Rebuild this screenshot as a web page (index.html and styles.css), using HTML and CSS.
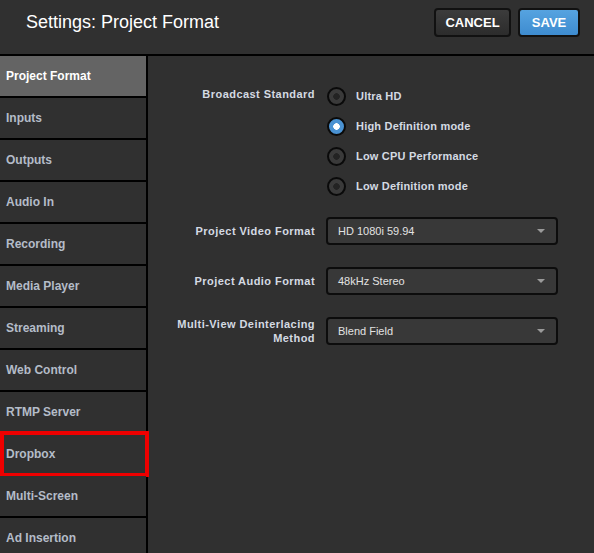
FILE: index.html
```html
<!DOCTYPE html>
<html>
<head>
<meta charset="utf-8">
<link rel="stylesheet" href="styles.css">
</head>
<body>
<div class="app">
  <header class="header">
    <h1 class="title">Settings: Project Format</h1>
    <div class="actions">
      <button class="btn btn-cancel">CANCEL</button>
      <button class="btn btn-save">SAVE</button>
    </div>
  </header>
  <div class="body">
    <nav class="sidebar">
      <div class="nav-item active">Project Format</div>
      <div class="nav-item">Inputs</div>
      <div class="nav-item">Outputs</div>
      <div class="nav-item">Audio In</div>
      <div class="nav-item">Recording</div>
      <div class="nav-item">Media Player</div>
      <div class="nav-item">Streaming</div>
      <div class="nav-item">Web Control</div>
      <div class="nav-item">RTMP Server</div>
      <div class="nav-item highlighted">Dropbox<span class="annot"></span></div>
      <div class="nav-item">Multi-Screen</div>
      <div class="nav-item">Ad Insertion</div>
    </nav>
    <main class="content">
      <div class="form">
        <div class="label label-top">Broadcast Standard</div>
        <div class="radios">
          <div class="radio-row"><span class="radio"></span><span class="radio-text">Ultra HD</span></div>
          <div class="radio-row"><span class="radio checked"></span><span class="radio-text">High Definition mode</span></div>
          <div class="radio-row"><span class="radio"></span><span class="radio-text">Low CPU Performance</span></div>
          <div class="radio-row"><span class="radio"></span><span class="radio-text">Low Definition mode</span></div>
        </div>

        <div class="label">Project Video Format</div>
        <div class="select"><span>HD 1080i 59.94</span><span class="caret"></span></div>

        <div class="label">Project Audio Format</div>
        <div class="select"><span>48kHz Stereo</span><span class="caret"></span></div>

        <div class="label">Multi-View Deinterlacing<br>Method</div>
        <div class="select"><span>Blend Field</span><span class="caret"></span></div>
      </div>
    </main>
  </div>
</div>
</body>
</html>
```

FILE: styles.css
```css
html, body {
  margin: 0;
  padding: 0;
  background: #303030;
  height: 100%;
  overflow: hidden;
}
.app {
  font-family: "Liberation Sans", Arial, sans-serif;
  width: 594px;
  height: 553px;
  display: flex;
  flex-direction: column;
}
.header {
  height: 54px;
  border-bottom: 2px solid #000;
  background: #303030;
  display: flex;
  align-items: center;
  justify-content: space-between;
  padding: 0 14px 0 26px;
  box-sizing: content-box;
}
.title {
  margin: 0;
  font-weight: normal;
  font-size: 18px;
  color: #fff;
  position: relative;
  top: -5px;
}
.actions {
  display: flex;
  gap: 7px;
  position: relative;
  top: -5px;
}
.btn {
  font-family: "Liberation Sans", Arial, sans-serif;
  font-weight: bold;
  font-size: 13px;
  color: #fff;
  border: 2px solid #111;
  border-radius: 4px;
  height: 29px;
  padding: 0;
  cursor: pointer;
}
.btn-cancel {
  width: 77px;
  background: linear-gradient(#3c3c3c, #2c2c2c);
}
.btn-save {
  width: 62px;
  background: linear-gradient(#56a3e0, #3e8cd0);
}
.body {
  flex: 1;
  display: flex;
  min-height: 0;
}
.sidebar {
  width: 146px;
  border-right: 2px solid #000;
  display: flex;
  flex-direction: column;
  flex-shrink: 0;
}
.nav-item {
  height: 40px;
  border-bottom: 2px solid #000;
  flex-shrink: 0;
  display: flex;
  align-items: center;
  padding-left: 6px;
  font-weight: bold;
  font-size: 12px;
  color: #b4bcc8;
  background: #303030;
  position: relative;
}
.nav-item.active {
  background: #646464;
  color: #fff;
}
.annot {
  position: absolute;
  left: 0;
  top: -3px;
  width: 141px;
  height: 38px;
  border: 4px solid #ee0000;
}
.content {
  flex: 1;
  background: #303030;
}
.form {
  display: grid;
  grid-template-columns: 167px 232px;
  column-gap: 11px;
  row-gap: 22px;
  padding-top: 25px;
  align-items: center;
}
.label {
  text-align: right;
  font-weight: bold;
  font-size: 11px;
  letter-spacing: 0.45px;
  color: #d4dae2;
  line-height: 14px;
}
.label-top {
  align-self: start;
  padding-top: 6px;
}
.radios {
  display: flex;
  flex-direction: column;
  margin-bottom: -6px;
}
.radio-row {
  height: 30px;
  display: flex;
  align-items: center;
  gap: 10px;
}
.radio {
  width: 15px;
  height: 15px;
  border: 2px solid #0a0a0a;
  border-radius: 50%;
  background: radial-gradient(circle, #232323 0 3px, #3a3a3a 3.5px);
  flex-shrink: 0;
  margin-left: 1px;
}
.radio.checked {
  background: radial-gradient(circle, #ffffff 0 3px, #4a92d2 3.5px);
}
.radio-text {
  font-weight: bold;
  font-size: 11px;
  letter-spacing: 0.2px;
  color: #d4dae2;
}
.select {
  height: 24px;
  border: 2px solid #0c0c0c;
  border-radius: 4px;
  background: #383838;
  display: flex;
  align-items: center;
  justify-content: space-between;
  padding: 0 11px 0 10px;
  font-size: 11px;
  color: #e2e2e2;
}
.caret {
  width: 0;
  height: 0;
  border-left: 4px solid transparent;
  border-right: 4px solid transparent;
  border-top: 4px solid #9a9a9a;
}
```
